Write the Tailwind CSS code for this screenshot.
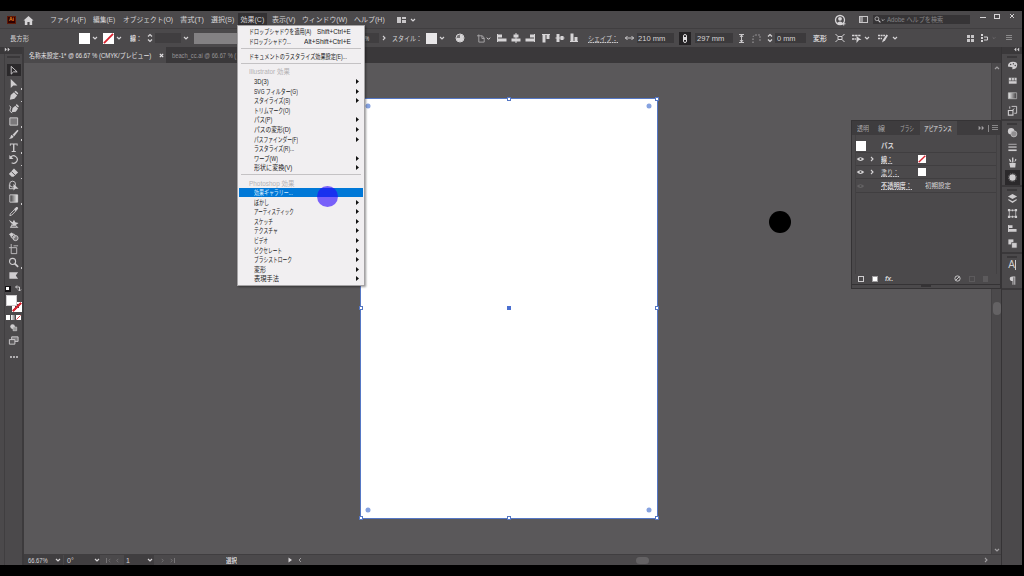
<!DOCTYPE html>
<html lang="ja">
<head>
  <meta charset="UTF-8" />
  <meta name="viewport" content="width=device-width, initial-scale=1.0"/>
  <title>Illustrator</title>
  <script src="https://cdn.jsdelivr.net/npm/@tailwindcss/browser@4"></script>
</head>
<body class="bg-black overflow-hidden font-['Liberation_Sans','Noto_Sans_CJK_JP',sans-serif] text-[7px] leading-none text-[#d6d4d6]">

  <!-- Icon sprite -->
  <svg class="absolute size-0">
    <symbol id="chev" viewBox="0 0 6 6"><path d="M1 2l2 2 2-2" fill="none" stroke="currentColor" stroke-width="1.2"/></symbol>
    <symbol id="right" viewBox="0 0 6 6"><path d="M2 1l2 2-2 2" fill="none" stroke="currentColor" stroke-width="1.1"/></symbol>
    <symbol id="left" viewBox="0 0 6 6"><path d="M4 1L2 3l2 2" fill="none" stroke="currentColor"/></symbol>
    <symbol id="spin" viewBox="0 0 6 10"><path d="M1 3.5l2-2 2 2M1 6.5l2 2 2-2" fill="none" stroke="currentColor" stroke-width="1.2"/></symbol>
    <symbol id="dbl" viewBox="0 0 8 6"><path d="M1 1l2 2-2 2zM4.5 1l2 2-2 2z" fill="currentColor" stroke="currentColor" stroke-width=".5"/></symbol>
    <symbol id="dblL" viewBox="0 0 8 6"><path d="M3.5 1l-2 2 2 2zM7 1L5 3l2 2z" fill="currentColor" stroke="currentColor" stroke-width=".5"/></symbol>
    <symbol id="lines" viewBox="0 0 6 6"><path d="M0 .5h6M0 2.5h6M0 4.500h6" stroke="currentColor" stroke-width=".7"/></symbol>
    <symbol id="none" viewBox="0 0 12 12"><path d="M0 0h12v12H0z" fill="#fff"/><path d="M1 11L11 1" stroke="#d8232f" stroke-width="2"/></symbol>
    <symbol id="home" viewBox="0 0 12 12"><path d="M6 1l5.5 5H10v5H7.2V7.5H4.8V11H2V6H.5z" fill="currentColor"/></symbol>
    <symbol id="user" viewBox="0 0 12 12"><circle cx="6" cy="6" r="4.500" fill="none" stroke="currentColor" stroke-width="1.300"/><circle cx="6" cy="4.800" r="1.900" fill="currentColor"/><path d="M3 9q3-3 6 0-3 3-6 0z" fill="currentColor"/><path d="M9.700 8v3.500M8 9.800h3.500" stroke="currentColor"/></symbol>
    <symbol id="alignL" viewBox="0 0 10 10"><path d="M0 1h1v8H0z M1 1.500h4V4.500H1zM1 5.500h8.500v3H1z" fill="currentColor"/></symbol>
    <symbol id="alignC" viewBox="0 0 10 10"><path d="M4.500 0h1v10h-1zM2.500 1.500h5V4.500h-5zM.5 5.500h9v3h-9z" fill="currentColor"/></symbol>
    <symbol id="alignR" viewBox="0 0 10 10"><path d="M9 1h1v8H9zM5 1.500h4v3H5zM.5 5.500H9v3H.5z" fill="currentColor"/></symbol>
    <symbol id="alignT" viewBox="0 0 10 10"><path d="M1 1h8v1H1zM1.500 2h3v7.500h-3zM5.500 2h3v4h-3z" fill="currentColor"/></symbol>
    <symbol id="alignM" viewBox="0 0 10 10"><path d="M.5 4.500h9v1h-9zM1.500 1h3v8h-3zM5.500 3h3v4h-3z" fill="currentColor"/></symbol>
    <symbol id="alignB" viewBox="0 0 10 10"><path d="M1 8h8v1H1zM1.500.5h3V8h-3zM5.500 4h3v4h-3z" fill="currentColor"/></symbol>
    <symbol id="globe" viewBox="0 0 10 10"><circle cx="5" cy="5" r="4" fill="#777577" stroke="currentColor"/><path d="M5 1.500a3.500 3.500 0 1 1-3.500 3.500L5 5z" fill="currentColor"/></symbol>
    <symbol id="doc" viewBox="0 0 10 10"><path d="M2 .5V9H8V4.500L6 2H0" fill="none" stroke="currentColor"/><path d="M5.500 2v3H8" fill="none" stroke="currentColor"/></symbol>
    <symbol id="xform" viewBox="0 0 10 10"><path d="M3 3.500h4v3H3zM.5 1L3 3.500M9.500 1L7 3.500M.5 9L3 6.500M9.500 9L7 6.500" fill="none" stroke="currentColor"/></symbol>
    <symbol id="pick" viewBox="0 0 10 10"><path d="M0 2.500h8.500M0 6h4" stroke="currentColor" stroke-width="1.500" stroke-dasharray="2.500 .6"/><path d="M4.500 10V3l5 4H7z" fill="currentColor"/></symbol>
    <symbol id="edit" viewBox="0 0 10 10"><path d="M0 2.500h7M0 5.500h4" stroke="currentColor" stroke-width="1.500" stroke-dasharray="2 .6"/><path d="M4 9.500l1-3 3.500-5 1.500 1-3 5z" fill="currentColor"/></symbol>

    <symbol id="select" viewBox="0 0 12 12"><path d="M3.500 1.500v8.500l2.500-2.500h4z" fill="none" stroke="currentColor"/></symbol>
    <symbol id="direct" viewBox="0 0 12 12"><path d="M3 1v10l2.800-2.800h4.500z" fill="currentColor"/></symbol>
    <symbol id="pen" viewBox="0 0 12 12"><path d="M2 10.500l1-5L6.500 2.500l3.500 3.500-3 3.500zM7 2l1.500-1.200 2.700 2.700L10.500 5z" fill="currentColor"/></symbol>
    <symbol id="curve" viewBox="0 0 12 12"><path d="M4 10l1-4.500L8 3l3 3-2.500 3.500zM8.500 2.500L9.500 1 12 3.500 11 5z" fill="currentColor"/><path d="M1.500 3q3 1 1 3.500t2 4.500" fill="none" stroke="currentColor"/></symbol>
    <symbol id="rect" viewBox="0 0 12 12"><path d="M2 2h8.500v8H2z" fill="#7b797b" stroke="currentColor"/></symbol>
    <symbol id="brush" viewBox="0 0 12 12"><path d="M10.300.8l1.200 1.200L6.800 8 5 6.200zM4.500 6.700L6.300 8.500Q4.500 11 1 10.500 3 9.500 3 8t1.500-1.300z" fill="currentColor"/></symbol>
    <symbol id="type" viewBox="0 0 12 12"><path d="M2 1.500h8.500V4h-1V2.700H7v7.100h1.500V11H4V9.800h1.500V2.700H3V4H2z" fill="currentColor"/></symbol>
    <symbol id="rotate" viewBox="0 0 12 12"><path d="M3 3.500a4 4 0 1 1 1 6" fill="none" stroke="currentColor" stroke-width="1.300"/><path d="M1.500 1v4.500H6z" fill="currentColor"/></symbol>
    <symbol id="eraser" viewBox="0 0 12 12"><path d="M6.500 1.500L11 6l-5 4.500H4L1 7.500z" fill="currentColor"/><path d="M3.800 5l4 4" stroke="#4b494b"/></symbol>
    <symbol id="shaper" viewBox="0 0 12 12"><circle cx="5" cy="4.500" r="3.200" fill="none" stroke="currentColor"/><path d="M1.500 5v4.500h5" fill="none" stroke="currentColor"/><path d="M6 4v7.500L8 9.500h3.500z" fill="currentColor"/></symbol>
    <linearGradient id="g"><stop offset="0" stop-color="#3a383a"/><stop offset="1" stop-color="#eee"/></linearGradient>
    <linearGradient id="g2"><stop offset="0" stop-color="#eee"/><stop offset="1" stop-color="#3a383a"/></linearGradient>
    <symbol id="grad" viewBox="0 0 12 12"><path d="M2 2h8.500v8H2z" fill="url(#g)" stroke="currentColor"/></symbol>
    <symbol id="gradP" viewBox="0 0 12 12"><path d="M1.500 3h9v6.500h-9z" fill="url(#g2)" stroke="#bbb" stroke-width=".8"/></symbol>
    <symbol id="dropper" viewBox="0 0 12 12"><path d="M2 10.500l.5-2 4.500-4.500 1.500 1.500L4 10z" fill="none" stroke="currentColor"/><path d="M6.500 3.500L9 1.200Q11.500.5 11 3L8.700 5.700z" fill="currentColor"/></symbol>
    <symbol id="puppet" viewBox="0 0 12 12"><path d="M1 2l4 2.500L6.500 2 8 4.500l3.500 1L8.500 7.500l3 3H2L4 7z" fill="currentColor"/><path d="M4 9h5M2 5l3 2" stroke="#4b494b" stroke-width=".8"/></symbol>
    <symbol id="blend" viewBox="0 0 12 12"><path d="M1 3.500L4 1.500 6.500 4 4 6.500z" fill="currentColor"/><circle cx="8.200" cy="7.700" r="2.800" fill="#777577" stroke="currentColor"/><circle cx="5.500" cy="5.500" r="2.300" fill="none" stroke="currentColor"/></symbol>
    <symbol id="artb" viewBox="0 0 12 12"><path d="M3.500 4h6v6.500h-6zM3.500 0v4H1M6 2h5" fill="none" stroke="currentColor" stroke-width=".9"/></symbol>
    <symbol id="zoom" viewBox="0 0 12 12"><circle cx="5" cy="4.800" r="3.300" fill="none" stroke="currentColor" stroke-width="1.200"/><path d="M7.500 7.300l3.500 3.500" stroke="currentColor" stroke-width="1.800"/></symbol>
    <symbol id="flag" viewBox="0 0 12 12"><path d="M1.500 2.500H11L8.500 6l2.500 3.500H1.500z" fill="currentColor"/></symbol>
    <symbol id="screens" viewBox="0 0 12 12"><path d="M4 2h7v5H4z" fill="#7b797b" stroke="currentColor"/><path d="M1.500 5h6v5h-6z" fill="#5b595b" stroke="currentColor"/></symbol>
    <symbol id="mode" viewBox="0 0 12 12"><circle cx="5" cy="5" r="2.500" fill="currentColor"/><path d="M5.500 5.500h4v4h-4z" fill="#999" stroke="currentColor" stroke-width=".7"/></symbol>

    <symbol id="palette" viewBox="0 0 12 12"><path d="M1 7Q1 2 6.500 2T11 6Q11 10 5.500 10 7 7.500 4.500 7.500T1 7z" fill="currentColor"/><circle cx="7" cy="4" r=".8" fill="#4b494b"/><circle cx="9" cy="6" r=".8" fill="#4b494b"/><circle cx="4" cy="5" r=".8" fill="#4b494b"/></symbol>
    <symbol id="swatch" viewBox="0 0 12 12"><path d="M2 3h8.500v6.500H2z" fill="currentColor"/><path d="M2 6.300h8.500M5 3v3.500M8 3v3.500" stroke="#5b595b" stroke-width=".8"/></symbol>
    <symbol id="export" viewBox="0 0 12 12"><path d="M5 1.500h5.500V9H8M3 4V1.500" fill="none" stroke="currentColor"/><path d="M1.500 6h5v5h-5z" fill="none" stroke="currentColor" stroke-width="1.200"/><path d="M5.500 6l2.500-2" stroke="currentColor"/></symbol>
    <symbol id="circles" viewBox="0 0 12 12"><circle cx="4.500" cy="4.500" r="3.500" fill="currentColor"/><circle cx="7.500" cy="7.500" r="3.300" fill="#918f91" stroke="#c6c4c6" stroke-width=".8"/></symbol>
    <symbol id="stroke" viewBox="0 0 12 12"><path d="M1.500 2.500h9" stroke="currentColor" stroke-width=".8"/><path d="M1.500 5.500h9" stroke="currentColor" stroke-width="1.300"/><path d="M1.500 9h9" stroke="currentColor" stroke-width="1.800"/></symbol>
    <symbol id="cup" viewBox="0 0 12 12"><path d="M2.500 6.500h7L9 11.500H3.500zM2 2l2 1 1 3-2-1zM5.500.5h1.500V6H5.500zM9 2l1.500 1L8 6z" fill="currentColor"/></symbol>
    <symbol id="appear" viewBox="0 0 12 12"><circle cx="6" cy="6" r="3.500" fill="currentColor"/><circle cx="6" cy="6" r="4.500" fill="none" stroke="currentColor" stroke-width=".5" stroke-dasharray="1 1"/></symbol>
    <symbol id="layers" viewBox="0 0 12 12"><path d="M6 1l5 2.800-5 2.700-5-2.700z" fill="currentColor"/><path d="M1.500 6.500L6 9l4.500-2.500v1.500L6 11 1.500 8z" fill="currentColor"/></symbol>
    <symbol id="boards" viewBox="0 0 12 12"><path d="M2.500 2.500h7v7h-7z" fill="none" stroke="currentColor" stroke-width=".8"/><path d="M1 1h2.500v2.500H1zM8.500 1H11v2.500H8.500zM1 8.500h2.500V11H1zM8.500 8.500H11V11H8.500zM5.200 1.500h1.600V3.500H5.200zM5.200 8.500h1.600v2H5.200z" fill="currentColor"/></symbol>
    <symbol id="path" viewBox="0 0 12 12"><path d="M1.500 1.500H7V7H1.500z" fill="currentColor"/><path d="M5 5h6v6H5z" fill="currentColor" stroke="#4b494b" stroke-width=".8"/></symbol>
    <symbol id="para" viewBox="0 0 12 12"><path d="M9 1.500v9H8v-8H7v8H6V6.500Q3 6.500 3 4t3-2.500z" fill="currentColor"/></symbol>
    <symbol id="eye" viewBox="0 0 12 8"><path d="M1 4q5-5 10 0-5 5-10 0z" fill="currentColor"/><circle cx="6" cy="4" r="1.300" fill="#4b494b"/></symbol>
  </svg>

  <div class="mt-[11px] h-[554px] w-[1022px] flex flex-col bg-[#4b494b]">

    <!-- Menu bar -->
    <div class="h-[17px] flex items-center shrink-0">
      <div class="ml-[7px] w-[9px] h-[8px] bg-[#310000] border border-[#5f1a08] text-[#f08a20] text-[5px] font-bold flex items-center justify-center">Ai</div>
      <svg class="ml-[7px] mt-0.5 size-[11px]"><use href="#home"/></svg>
      <span data-fit class="ml-[16px] w-[36px]">ファイル(F)</span>
      <span data-fit class="ml-[7px] w-[22px]">編集(E)</span>
      <span data-fit class="ml-[8px] w-[50px]">オブジェクト(O)</span>
      <span data-fit class="ml-[7px] w-[24px]">書式(T)</span>
      <span data-fit class="ml-[7px] w-[23px]">選択(S)</span>
      <div class="ml-[4px] w-[29px] h-[13px] px-[2.5px] flex items-center bg-[#333133]"><span data-fit class="w-[24px]">効果(C)</span></div>
      <span data-fit class="ml-[5px] w-[23px]">表示(V)</span>
      <span data-fit class="ml-[7px] w-[45px]">ウィンドウ(W)</span>
      <span data-fit class="ml-[7px] w-[31px]">ヘルプ(H)</span>
      <div class="ml-[12px] grid grid-cols-2 gap-px w-[9px] h-[6px]">
        <div class="row-span-2 bg-[#c8c6c8]"></div><div class="bg-[#c8c6c8]"></div><div class="bg-[#c8c6c8]"></div>
      </div>
      <svg class="ml-[4px] size-[6px]"><use href="#chev"/></svg>
      <svg class="ml-auto size-[12px]"><use href="#user"/></svg>
      <div class="ml-[13px] w-[9px] h-[7px] border border-[#c8c6c8]"><div class="w-[3px] h-full bg-[#c8c6c8]/60"></div></div>
      <div class="ml-[5px] w-[97px] h-[9px] bg-[#363436] flex items-center text-[#858385]">
        <svg class="ml-px size-[7px] text-[#d6d4d6]"><use href="#zoom"/></svg>
        <svg class="size-[4px] text-[#d6d4d6]"><use href="#chev"/></svg>
        <span data-fit class="ml-[2px] w-[56px]">Adobe ヘルプを検索</span>
      </div>
      <div class="ml-[10px] w-[6px] h-px bg-[#d6d4d6] self-start mt-[6px]"></div>
      <div class="ml-[8px] w-[6px] h-[5px] border border-[#d6d4d6] self-start mt-[3px]"></div>
      <svg class="ml-[9px] mr-[7px] size-[6px] self-start mt-[2px]" viewBox="0 0 6 6"><path d="M1 1l4 4M5 1L1 5" stroke="#d6d4d6"/></svg>
    </div>

    <!-- Control bar -->
    <div class="h-[19px] flex items-center shrink-0 border-t border-[#403e40]">
      <span data-fit class="ml-[10px] w-[19px]">長方形</span>
      <div class="ml-[50px] w-[11px] h-[11px] bg-white"></div>
      <svg class="ml-[2px] size-[6px]"><use href="#chev"/></svg>
      <svg class="ml-[5px] size-[11px]"><use href="#none"/></svg>
      <svg class="ml-[2px] size-[6px]"><use href="#chev"/></svg>
      <span data-fit class="ml-[8px] w-[12px] font-bold">線：</span>
      <svg class="ml-[5px] w-[6px] h-[10px]"><use href="#spin"/></svg>
      <div class="ml-[2px] w-[26px] h-[10px] bg-[#403e40]"></div>
      <svg class="ml-[2px] size-[6px]"><use href="#chev"/></svg>
      <div class="ml-[5px] w-[46px] h-[11px] bg-[#838183]"></div>
      <div class="ml-[110px] w-[29px] h-[10px] bg-[#403e40] flex items-center pl-[15px]"><span data-fit class="w-[4px]">%</span></div>
      <svg class="ml-[2px] size-[6px]"><use href="#right"/></svg>
      <span data-fit class="ml-[5px] w-[30px]">スタイル：</span>
      <div class="ml-[4px] w-[11px] h-[11px] bg-[#e8e6e8]"></div>
      <svg class="ml-[2px] size-[6px]"><use href="#chev"/></svg>
      <svg class="ml-[10px] size-[10px]"><use href="#globe"/></svg>
      <svg class="ml-[12px] size-[9px] text-[#aaa8aa]"><use href="#doc"/></svg>
      <svg class="size-[5px]"><use href="#chev"/></svg>
      <svg class="ml-[6px] size-[10px]"><use href="#alignL"/></svg>
      <svg class="ml-[4px] size-[10px]"><use href="#alignC"/></svg>
      <svg class="ml-[4px] size-[10px]"><use href="#alignR"/></svg>
      <svg class="ml-[6px] size-[10px]"><use href="#alignT"/></svg>
      <svg class="ml-[4px] size-[10px]"><use href="#alignM"/></svg>
      <svg class="ml-[4px] size-[10px]"><use href="#alignB"/></svg>
      <span data-fit class="ml-[9px] w-[30px] underline decoration-dotted underline-offset-1">シェイプ：</span>
      <svg class="ml-[7px] w-[9px] h-[6px]" viewBox="0 0 9 6"><path d="M0 3h9M2.500 1L.5 3l2 2M6.500 1l2 2-2 2" fill="none" stroke="currentColor" stroke-width=".9"/></svg>
      <div class="ml-[3px] w-[37px] h-[10px] bg-[#3c3a3c] flex items-center pl-px"><span data-fit class="w-[27px]">210 mm</span></div>
      <div class="ml-[5px] w-[12px] h-[13px] bg-[#242224] flex items-center justify-center"><div class="w-[4px] h-[9px] rounded border border-[#e0dee0] flex items-center"><div class="h-[3px] w-full bg-[#e0dee0]"></div></div></div>
      <div class="ml-[4px] w-[38px] h-[10px] bg-[#3c3a3c] flex items-center pl-[2px]"><span data-fit class="w-[27px]">297 mm</span></div>
      <svg class="ml-[6px] w-[5px] h-[9px]" viewBox="0 0 5 9"><path d="M0 .5h5M0 8.500h5M2.500 1v7M1 3l1.500-2L4 3M1 6l1.500 2L4 6" fill="none" stroke="currentColor" stroke-width=".9"/></svg>
      <svg class="ml-[8px] size-[9px]" viewBox="0 0 9 9"><path d="M1 9V4Q1 1 4 1h4v7" fill="none" stroke="#a8a6a8" stroke-dasharray="1.500 1.500"/></svg>
      <svg class="ml-[6px] w-[6px] h-[10px]"><use href="#spin"/></svg>
      <div class="ml-[2px] w-[31px] h-[10px] bg-[#3c3a3c] flex items-center pl-[2px]"><span data-fit class="w-[19px]">0 mm</span></div>
      <span data-fit class="ml-[7px] w-[14px] font-bold">変形</span>
      <svg class="ml-[8px] size-[10px]"><use href="#xform"/></svg>
      <svg class="ml-[7px] size-[10px]"><use href="#pick"/></svg>
      <svg class="ml-[2px] size-[6px]"><use href="#chev"/></svg>
      <svg class="ml-[8px] size-[10px]"><use href="#edit"/></svg>
      <svg class="ml-[4px] size-[6px]"><use href="#chev"/></svg>
      <div class="ml-auto grid grid-cols-2 gap-px w-[7px] h-[7px]">
        <div class="bg-[#c8c6c8]"></div><div class="bg-[#c8c6c8]"></div><div class="bg-[#c8c6c8]"></div><div class="bg-[#c8c6c8]"></div>
      </div>
      <svg class="ml-[7px] w-[8px] h-[9px]" viewBox="0 0 8 9"><path d="M1 0v9" stroke="currentColor" stroke-width="2" stroke-dasharray="2 1"/><path d="M3 3h3.500v3H3" fill="none" stroke="currentColor"/></svg>
      <svg class="ml-[3px] size-[4px] text-[#777577]"><use href="#chev"/></svg>
      <svg class="ml-[10px] mr-[10px] size-[6px] text-[#a8a6a8]"><use href="#lines"/></svg>
    </div>

    <div class="flex flex-1 min-h-0">
      <!-- Toolbar -->
      <div class="w-[24px] flex flex-col shrink-0 border-r-2 border-[#3c3a3c] text-[#cfcdcf]">
        <div class="h-[7px] bg-[#3a383a] shrink-0 pl-[4px]"><svg class="w-[7px] h-[5px]"><use href="#dbl"/></svg></div>
        <div class="flex-1 ml-[4px] border-l border-[#403e40] flex flex-col items-center">
          <div class="mt-[2px] w-[13px] h-[2px] bg-[#3a383a]"></div>
          <div id="tools" class="mt-[6px] w-full"></div>
          <div class="mt-[3px] flex gap-[4px] items-center h-[8px]">
            <div class="w-[6px] h-[6px] bg-[#151315] p-px"><div class="size-[3px] bg-white"></div></div>
            <svg class="size-[7px]" viewBox="0 0 7 7"><path d="M1 2h3.500v4M2 .5L.5 2 2 3.500M3 4.500L4.500 6 6 4.500" fill="none" stroke="currentColor"/></svg>
          </div>
          <div class="relative mt-[2px] w-[16px] h-[17px]">
            <svg class="absolute right-0 bottom-0 size-[10px]"><use href="#none"/></svg>
            <div class="absolute right-[3px] bottom-[4px] size-[4px] bg-[#4b494b]"></div>
            <div class="absolute left-0 top-0 size-[11px] bg-white border border-[#cfcdcf]"></div>
            <svg class="absolute right-0 bottom-0 size-[10px]" viewBox="0 0 10 10"><path d="M1 9L9 1" stroke="#d8232f" stroke-width="2"/></svg>
          </div>
          <div class="mt-[3px] flex gap-px">
            <div class="w-[4px] h-[5px] bg-white"></div>
            <div class="w-[4px] h-[5px] bg-linear-to-r from-white to-[#777577]"></div>
            <svg class="size-[5px]"><use href="#none"/></svg>
          </div>
          <svg class="mt-[2px] size-[11px]"><use href="#mode"/></svg>
          <svg class="mt-[2px] size-[11px]"><use href="#screens"/></svg>
          <div class="mt-[10px] flex gap-px"><i class="size-[2px] bg-[#b0aeb0]"></i><i class="size-[2px] bg-[#b0aeb0]"></i><i class="size-[2px] bg-[#b0aeb0]"></i></div>
        </div>
      </div>

      <!-- Document area -->
      <div class="w-[977px] flex flex-col shrink-0">
        <div class="h-[16px] bg-[#3a383a] flex shrink-0">
          <div class="w-[142px] bg-[#4b494b] flex items-center pl-[5px]">
            <span data-fit class="w-[122px] text-[#e4e2e4]">名称未設定-1* @ 66.67 % (CMYK/プレビュー)</span>
            <svg class="ml-[8px] size-[5px]" viewBox="0 0 6 6"><path d="M1 1l4 4M5 1L1 5" stroke="#e4e2e4" stroke-width="1.500"/></svg>
          </div>
          <div class="flex items-center pl-[6px] text-[#969496]"><span data-fit class="w-[64px]">beach_cc.ai @ 66.67 % (</span></div>
        </div>
        <div class="flex flex-1 min-h-0">
          <div class="flex-1 bg-[#5a585a]"></div>
          <div class="w-[10px] bg-[#4b494b] border-l border-[#434143] flex flex-col items-center">
            <svg class="mt-[2px] size-[6px] rotate-180 text-[#a09ea0]"><use href="#chev"/></svg>
            <div class="mt-[231px] w-[8px] h-[13px] rounded-sm bg-[#646264]"></div>
            <svg class="mt-auto mb-[1px] size-[6px] text-[#a09ea0]"><use href="#chev"/></svg>
          </div>
        </div>
        <!-- Status bar -->
        <div class="h-[11px] flex items-center shrink-0 border-t border-[#403e40]">
          <div class="w-[39px] h-full bg-[#403e40] flex items-center pl-[4px]"><span data-fit class="w-[20px]">66.67%</span><svg class="ml-[7px] size-[6px]"><use href="#chev"/></svg></div>
          <div class="ml-px w-[36px] h-full bg-[#403e40] flex items-center pl-[3px]"><span data-fit class="w-[7px]">0°</span><svg class="ml-[20px] size-[6px]"><use href="#chev"/></svg></div>
          <div class="ml-[6px] w-px h-[5px] bg-[#777577]"></div>
          <svg class="size-[5px] text-[#777577]"><use href="#left"/></svg>
          <svg class="ml-[3px] size-[5px] text-[#777577]"><use href="#left"/></svg>
          <div class="ml-[4px] w-[30px] h-full bg-[#403e40] flex items-center pl-[2px]"><span class="w-[4px]">1</span><svg class="ml-auto mr-[1px] size-[6px]"><use href="#chev"/></svg></div>
          <svg class="ml-[6px] size-[5px] text-[#777577]"><use href="#right"/></svg>
          <svg class="ml-[4px] size-[5px] text-[#777577]"><use href="#right"/></svg>
          <div class="w-px h-[5px] bg-[#777577]"></div>
          <span data-fit class="ml-[51px] w-[11px] font-bold">選択</span>
          <svg class="ml-[50px] size-[6px]" viewBox="0 0 6 6"><path d="M1.500.5v5l3.500-2.500z" fill="currentColor"/></svg>
          <svg class="ml-[4px] size-[6px] text-[#a09ea0]"><use href="#left"/></svg>
          <div class="ml-[333px] w-[13px] h-[7px] rounded-sm bg-[#646264]"></div>
          <svg class="ml-auto mr-[12px] size-[6px] text-[#a09ea0]"><use href="#right"/></svg>
        </div>
      </div>

      <!-- Panel dock -->
      <div class="w-[21px] flex flex-col shrink-0 border-l border-[#353335] text-[#cfcdcf]">
        <div class="h-[7px] bg-[#3a383a] shrink-0 flex justify-end pr-[2px]"><svg class="w-[7px] h-[5px]"><use href="#dblL"/></svg></div>
        <div id="dock" class="flex flex-col"></div>
      </div>
    </div>
  </div>

  <!-- Artboard with its selection handles -->
  <div id="artboard" class="absolute left-[360px] top-[97.500px] w-[298px] h-[421px] bg-white border border-[#5577c4]"></div>

  <!-- Appearance panel -->
  <div class="absolute left-[851px] top-[120px] w-[150px] h-[169px] bg-[#4b494b] border border-[#353335] flex flex-col">
    <div class="h-[14px] bg-[#3e3c3e] flex items-center shrink-0 text-[#a8a6a8]">
      <span data-fit class="ml-[5px] w-[12px]">透明</span>
      <span data-fit class="ml-[9px] w-[7px]">線</span>
      <span data-fit class="ml-[15px] w-[14px]">ブラシ</span>
      <div class="ml-[6px] w-[37px] h-full bg-[#4b494b] flex items-center px-[4px] text-[#e8e6e8]"><span data-fit class="w-[28px]">アピアランス</span></div>
      <svg class="ml-auto w-[7px] h-[6px]"><use href="#dbl"/></svg>
      <div class="ml-[3px] w-px h-[7px] bg-[#8a888a]"></div>
      <svg class="ml-[3px] mr-[2px] size-[6px]"><use href="#lines"/></svg>
    </div>
    <div class="mx-[3px] border-x border-[#434143] flex-1">
      <div class="h-[18px] flex items-center border-b border-[#403e40] pt-[4px]"><div class="size-[10px] bg-white"></div><span data-fit class="ml-[15px] w-[13px] font-bold">パス</span></div>
      <div class="h-[13px] flex items-center border-b border-[#403e40]">
        <svg class="w-[9px] h-[6px]"><use href="#eye"/></svg><svg class="ml-[4px] size-[6px]"><use href="#right"/></svg>
        <span data-fit class="ml-[6px] w-[12px] font-bold underline decoration-dotted underline-offset-1">線：</span><svg class="ml-[25px] size-[8px]"><use href="#none"/></svg>
      </div>
      <div class="h-[13px] flex items-center border-b border-[#403e40]">
        <svg class="w-[9px] h-[6px]"><use href="#eye"/></svg><svg class="ml-[4px] size-[6px]"><use href="#right"/></svg>
        <span data-fit class="ml-[6px] w-[18px] underline decoration-dotted underline-offset-1">塗り：</span><div class="ml-[19px] size-[8px] bg-white"></div>
      </div>
      <div class="h-[14px] flex items-center border-b border-[#403e40]">
        <svg class="w-[9px] h-[6px] text-[#646264]"><use href="#eye"/></svg>
        <span data-fit class="ml-[16px] w-[31px] font-bold underline decoration-dotted underline-offset-1">不透明度：</span><span data-fit class="ml-[13px] w-[26px]">初期設定</span>
      </div>
    </div>
    <div class="h-[9px] flex items-center shrink-0 pl-[6px]">
      <div class="size-[6px] border border-[#cfcdcf]"></div>
      <div class="ml-[8px] size-[6px] border border-[#a09ea0] bg-white"></div>
      <span class="ml-[7px] italic font-bold">fx.</span>
      <svg class="ml-auto size-[7px]" viewBox="0 0 8 8"><circle cx="4" cy="4" r="3" fill="none" stroke="currentColor"/><path d="M2 6l4-4" stroke="currentColor"/></svg>
      <div class="ml-[8px] size-[6px] border border-[#5c5a5c]"></div>
      <div class="ml-[8px] mr-[12px] w-[5px] h-[6px] bg-[#5c5a5c]"></div>
    </div>
    <div class="h-[4px] mt-px border-t border-[#353335] flex justify-center"><div class="w-[10px] h-[2px] bg-[#353335]"></div></div>
  </div>

  <!-- Effect menu -->
  <div id="menu" class="absolute left-[237px] top-[25px] w-[128px] h-[261px] bg-[#f1eff1] border border-[#a5a3a5] text-[#222] shadow-[1px_1px_2px_#0006]"></div>

  <!-- Pointer highlight and brush dot -->
  <div class="absolute left-[317px] top-[185.500px] size-[21px] rounded-full bg-[#2800ff]/60"></div>
  <div class="absolute left-[769px] top-[211px] size-[22px] rounded-full bg-black"></div>

  <script>
    const icon = (id, cls) => `<svg class="${cls}"><use href="#${id}"/></svg>`;

    // Toolbar
    const tools = ['select', 'direct', 'pen', 'curve', 'rect', 'brush', 'type', 'rotate', 'eraser', 'shaper', 'grad', 'dropper', 'puppet', 'blend', 'artb', 'zoom', 'flag'];
    const noFlyout = ['select', 'curve', 'shaper', 'dropper', 'puppet', 'blend', 'artb', 'flag'];
    document.getElementById('tools').innerHTML = tools.map((t, i) => `
      <div class="h-[12.8px] flex items-center justify-center relative">
        <div class="w-[14px] h-[12px] flex items-center justify-center ${i === 0 ? 'bg-[#2b292b]' : ''}">${icon(t, 'size-[11px]')}</div>
        ${noFlyout.includes(t) ? '' : '<div class="absolute right-0 bottom-0 size-[1.5px] bg-[#cfcdcf]"></div>'}
      </div>`).join('');

    // Dock, one array per panel group
    const dock = [
      ['palette', 'swatch', 'gradP', 'export'],
      ['circles', 'stroke', 'cup', 'appear'],
      ['layers', 'boards', 'alignL', 'path'],
      ['char', 'para']
    ];
    document.getElementById('dock').innerHTML = dock.map(group => `
      <div class="border-b-2 border-[#3a383a] pb-[0.5px] flex flex-col items-center">
        <div class="mt-[2px] w-[10px] h-[2px] bg-[#3a383a]"></div>
        ${group.map(n => `<div class="w-[15px] h-[15px] flex items-center justify-center ${n === 'appear' ? 'bg-[#2b292b]' : ''}">
          ${n === 'char' ? '<span class="text-[10px] border-r border-[#cfcdcf]">A</span>' : icon(n, n === 'alignL' ? 'size-[9px]' : 'size-[11px]')}
        </div>`).join('')}
      </div>`).join('');

    // Selection handles: x %, y %
    const artboard = document.getElementById('artboard');
    for (const [x, y] of [[0, 0], [50, 0], [100, 0], [0, 50], [100, 50], [0, 100], [50, 100], [100, 100]]) {
      artboard.innerHTML += `<div class="absolute size-[4px] -translate-1/2 bg-white border border-[#5577c4]" style="left:${x}%;top:${y}%"></div>`;
    }
    for (const [x, y] of [[2.3, 1.8], [97.3, 1.8], [2.3, 98.3], [97.3, 98.3]]) {
      artboard.innerHTML += `<div class="absolute size-[5px] -translate-1/2 rounded-full bg-[#86a2e0]" style="left:${x}%;top:${y}%"></div>`;
    }
    artboard.innerHTML += '<div class="absolute left-1/2 top-1/2 size-[4px] -translate-1/2 bg-[#4a6fd0]"></div>';

    // Effect menu: [label, label width, has submenu]
    const heading = (text, w) => `<div class="h-[9.600px] flex items-center pl-[11px] text-[#b4b2b4]"><span data-fit style="width:${w}px">${text}</span></div>`;
    const item = ([text, w, sub]) => `<div class="h-[9.600px] flex items-center pl-[15px] pr-[4px] mx-px ${text.startsWith('効果') ? 'bg-[#0078d7] text-[#d8ecff]' : ''}">
      <span data-fit style="width:${w}px">${text}</span>
      ${sub ? '<svg class="ml-auto w-[3px] h-[5px]" viewBox="0 0 3 5"><path d="M0 0v5l3-2.500z" fill="#111"/></svg>' : ''}</div>`;
    const rule = '<div class="h-px mx-[3px] bg-[#c4c2c4]"></div>';
    document.getElementById('menu').innerHTML = `
      <div class="pt-[1px] pb-[2px] pl-[11px]">
        <div class="h-[9.600px] flex items-center"><span data-fit class="w-[62px]">ドロップシャドウを適用(A)</span><span data-fit class="ml-[6px] w-[34px]">Shift+Ctrl+E</span></div>
        <div class="h-[9.600px] flex items-center"><span data-fit class="w-[42px]">ドロップシャドウ...</span><span data-fit class="ml-[13px] w-[47px]">Alt+Shift+Ctrl+E</span></div>
      </div>
      ${rule}
      <div class="h-[14px] flex items-center pl-[11px]"><span data-fit class="w-[98px]">ドキュメントのラスタライズ効果設定(E)...</span></div>
      ${rule}
      <div class="pt-[3px] pb-[1.500px]">
        ${heading('Illustrator 効果', 41)}
        ${[['3D(3)', 15, 1], ['SVG フィルター(G)', 44, 1], ['スタイライズ(S)', 36, 1], ['トリムマーク(O)', 36], ['パス(P)', 18, 1], ['パスの変形(D)', 37, 1],
          ['パスファインダー(F)', 44, 1], ['ラスタライズ(R)...', 40], ['ワープ(W)', 24, 1], ['形状に変換(V)', 38, 1]].map(item).join('')}
      </div>
      ${rule}
      <div class="pt-[3px]">
        ${heading('Photoshop 効果', 45)}
        ${[['効果ギャラリー...', 39], ['ぼかし', 15, 1], ['アーティスティック', 40, 1], ['スケッチ', 19, 1], ['テクスチャ', 24, 1], ['ビデオ', 14, 1],
          ['ピクセレート', 28, 1], ['ブラシストローク', 38, 1], ['変形', 12, 1], ['表現手法', 25, 1]].map(item).join('')}
      </div>`;

    // Condense each label to the width of its box
    document.querySelectorAll('[data-fit]').forEach(el => {
      const inner = document.createElement('span');
      inner.className = 'block w-max whitespace-nowrap origin-left [text-decoration:inherit]';
      inner.append(...el.childNodes);
      el.classList.add('block', 'shrink-0');
      el.append(inner);
      const fit = () => inner.style.transform = `scaleX(${el.offsetWidth / inner.offsetWidth})`;
      const watcher = new ResizeObserver(fit);
      watcher.observe(el);
      watcher.observe(inner);
    });
  </script>
</body>
</html>
